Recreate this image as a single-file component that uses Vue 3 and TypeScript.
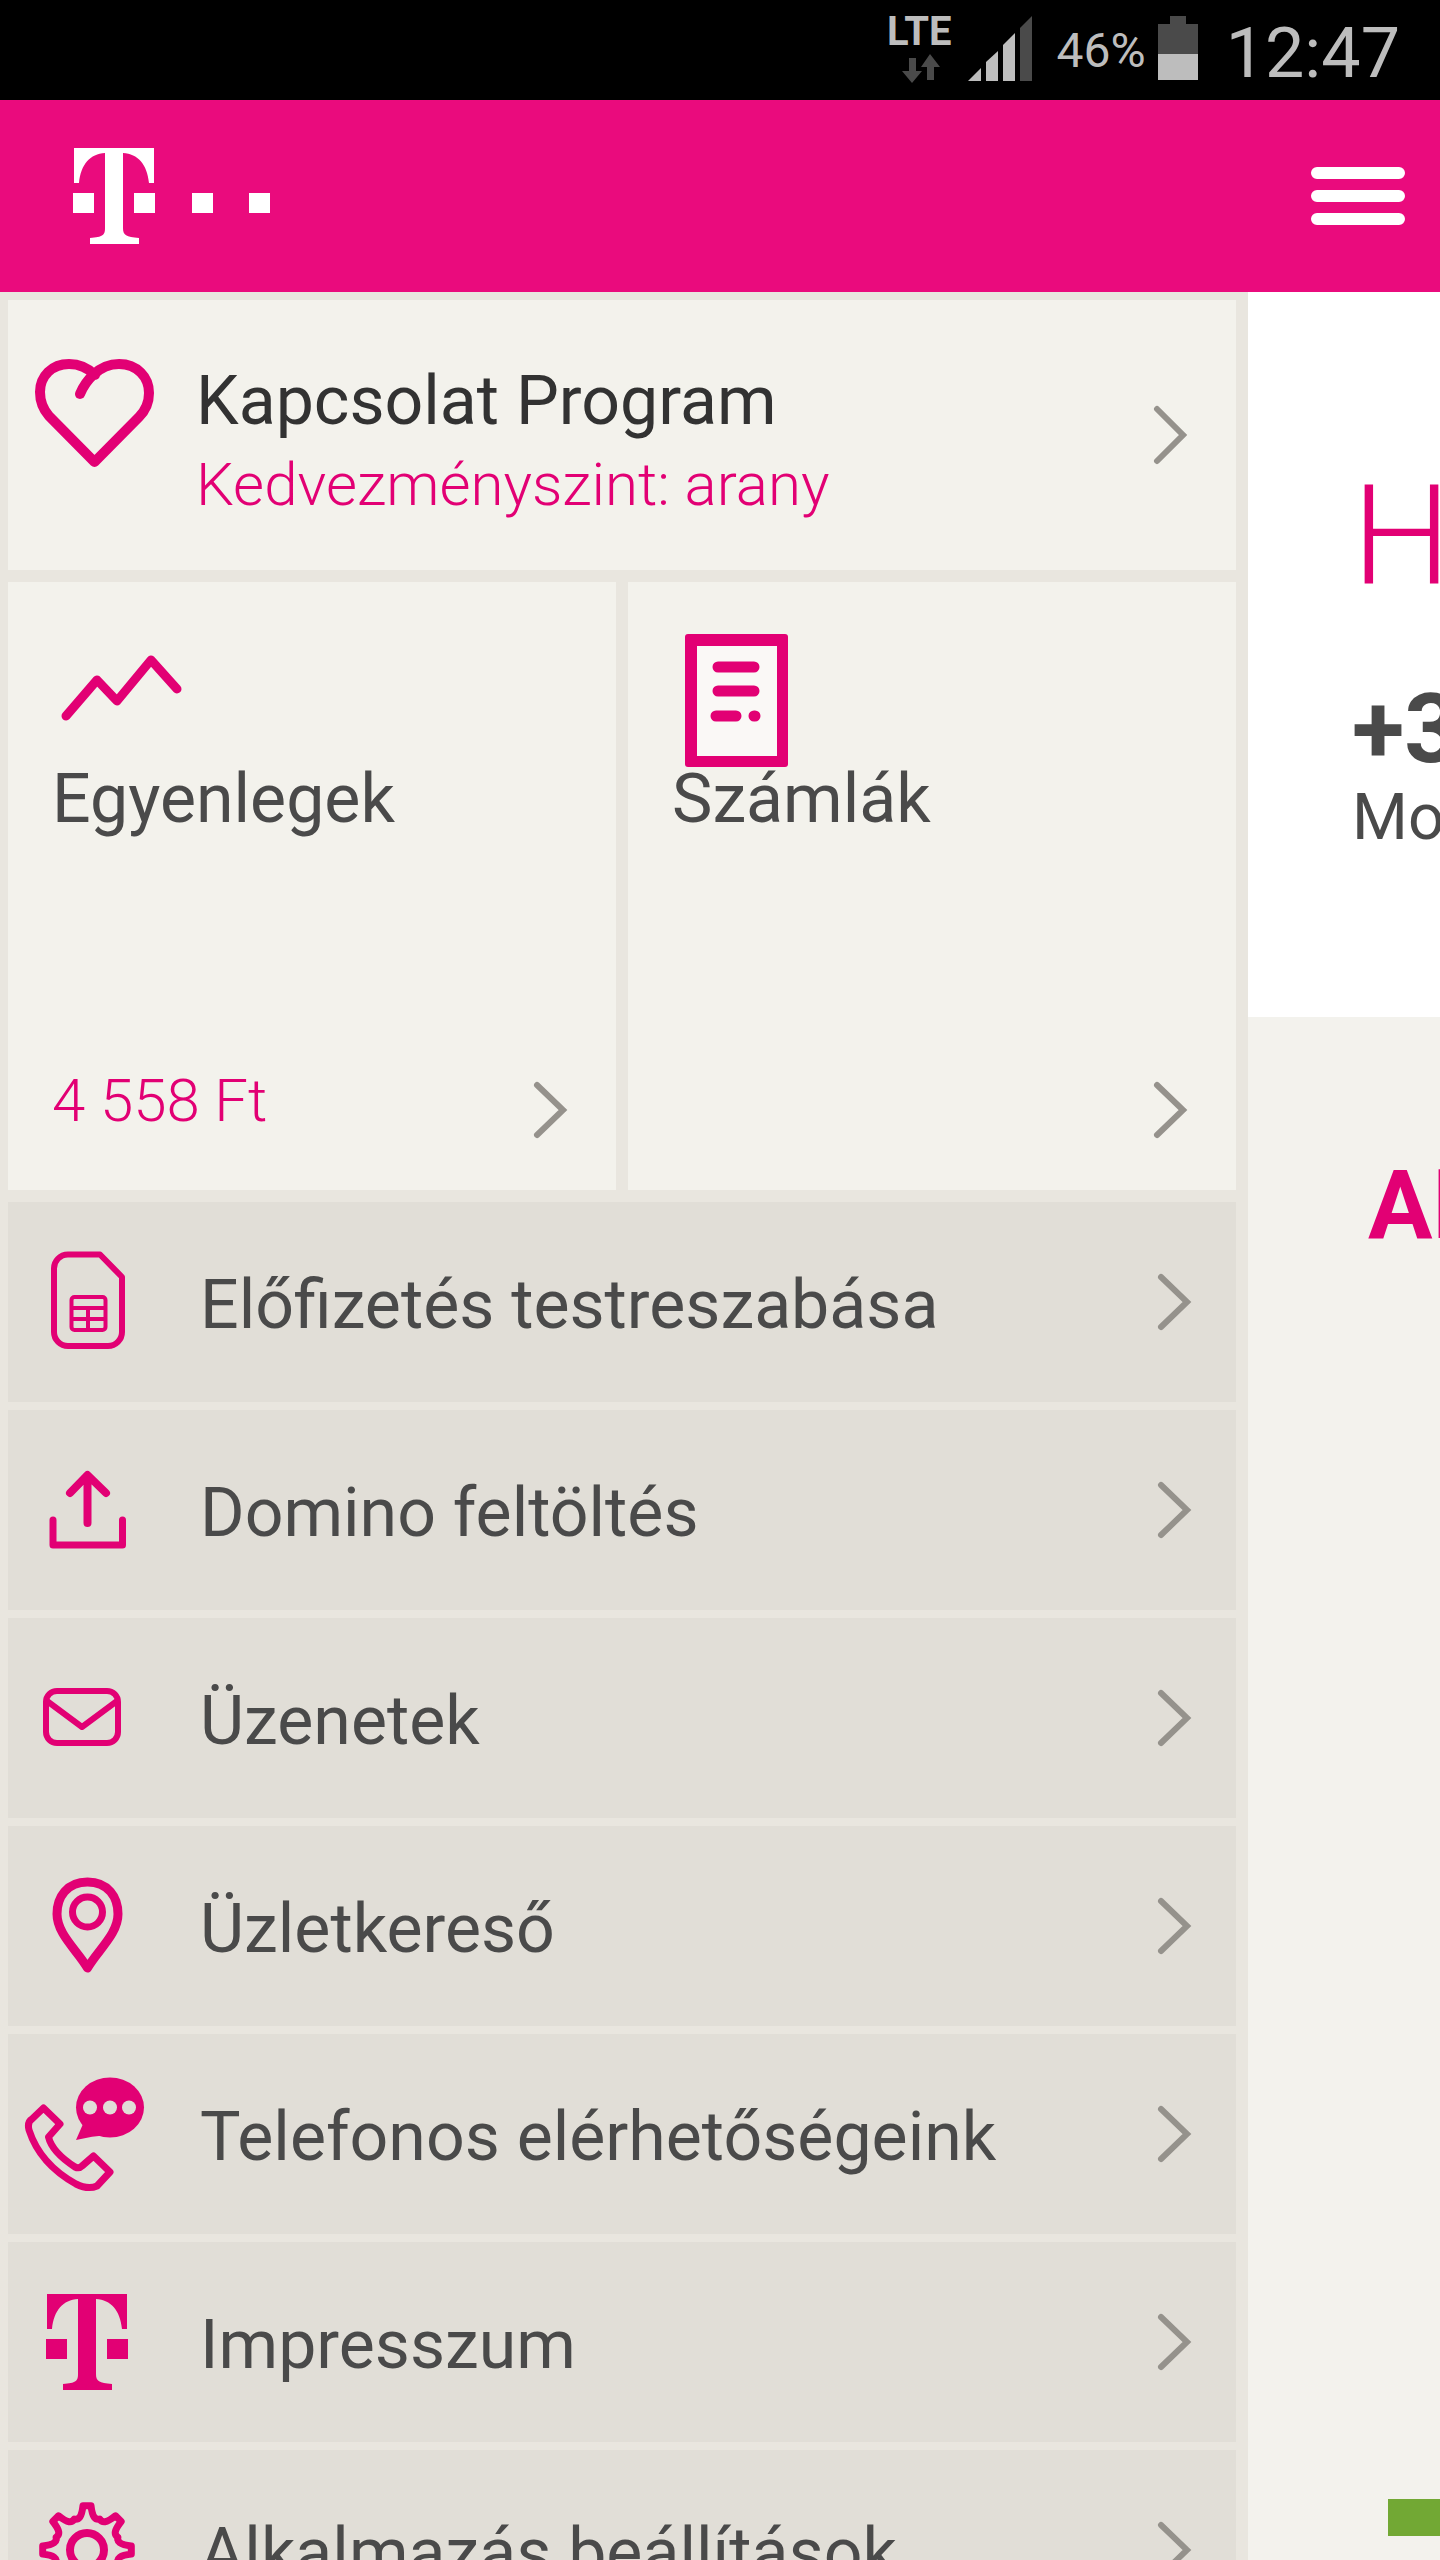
<script setup lang="ts">
type IconName = 'sim' | 'upload' | 'mail' | 'pin' | 'phone' | 'brand' | 'gear'

interface MenuItem {
  label: string
  icon: IconName
}

const items: MenuItem[] = [
  { label: 'Előfizetés testreszabása', icon: 'sim' },
  { label: 'Domino feltöltés', icon: 'upload' },
  { label: 'Üzenetek', icon: 'mail' },
  { label: 'Üzletkereső', icon: 'pin' },
  { label: 'Telefonos elérhetőségeink', icon: 'phone' },
  { label: 'Impresszum', icon: 'brand' },
  { label: 'Alkalmazás beállítások', icon: 'gear' },
]

const brandMark =
  'M1 0H81V35H76C74 16 65 6 50 5V80C50 87 53 89 66 90V96H17V90C30 89 32 87 32 80V5C17 6 8 16 6 35H1ZM0 45H21V65H0ZM61 45H82V65H61Z'

// Eight-tooth cog outline with scalloped valleys between the teeth
function gearPath(cx: number, cy: number): string {
  const point = (r: number, a: number) =>
    `${(cx + r * Math.cos(a)).toFixed(1)} ${(cy + r * Math.sin(a)).toFixed(1)}`
  const step = Math.PI / 4
  let d = ''
  for (let i = 0; i < 8; i++) {
    const a = i * step
    d += `${i ? 'L' : 'M'}${point(44.5, a - 0.09)}L${point(44.5, a + 0.09)}`
    d += `C${point(33, a + 0.16)} ${point(31, a + step / 2 - 0.12)} ${point(33.5, a + step / 2)}`
    d += `C${point(31, a + step / 2 + 0.12)} ${point(33, a + step - 0.16)} ${point(44.5, a + step - 0.09)}`
  }
  return d + 'Z'
}
const gear = gearPath(63, 60)
</script>

<template>
  <div class="app">
    <div class="status">
      <div class="network">
        <span class="lte">LTE</span>
        <svg width="48" height="30" viewBox="0 0 48 30" fill="#4a4a4a" aria-hidden="true">
          <path d="M14 4H21V17H27L17 29L7 17H14Z" />
          <path d="M32 26V13H26L35 0L45 13H39V26Z" />
        </svg>
      </div>
      <svg class="signal" width="64" height="66" viewBox="0 0 64 66" fill="#bdbdbd" aria-hidden="true">
        <path d="M0 65L13 52V65Z" />
        <path d="M18 65V46L30 35V65Z" />
        <path d="M35 65V29L47 17V65Z" />
        <path d="M52 65V12L64 0V65Z" fill="#4a4a4a" />
      </svg>
      <span class="percent">46%</span>
      <svg class="battery" width="40" height="64" viewBox="0 0 40 64" aria-hidden="true">
        <path d="M12 0H28V8H40V38H0V8H12Z" fill="#4a4a4a" />
        <path d="M0 38H40V64H0Z" fill="#bdbdbd" />
      </svg>
      <span class="clock">12:47</span>
    </div>

    <header class="header">
      <svg width="198" height="96" viewBox="0 0 198 96" fill="#fff" role="img" aria-label="Telekom">
        <path :d="brandMark" />
        <path d="M119 45H140V65H119ZM176 45H197V65H176Z" />
      </svg>
      <button class="burger" type="button" aria-label="Menü">
        <svg width="96" height="60" viewBox="0 0 96 60" stroke="#fff" stroke-width="12" stroke-linecap="round">
          <path d="M7 7H89M7 30H89M7 53H89" />
        </svg>
      </button>
    </header>

    <div class="body">
      <nav class="drawer">
        <a class="program" href="#">
          <svg class="heart stroked" width="128" height="120" viewBox="0 0 128 120" stroke-width="10">
            <path d="M48 41C53 29 66 11 87 11C105 11 117 24 117 40C117 50 113 58 107 64L62.500 109L17 63C10 55 8 48 8 39C8 23 20 11 37 11C48 11 56 15 63 22" />
          </svg>
          <span class="program-text">
            <span class="program-title">Kapcsolat Program</span>
            <span class="program-level">Kedvezményszint: arany</span>
          </span>
          <svg class="chevron" viewBox="0 0 40 60"><path d="M7 4L33 30L7 56" /></svg>
        </a>

        <div class="tiles">
          <a class="tile" href="#">
            <svg class="tile-icon stroked" width="134" height="134" viewBox="0 0 134 134" stroke-width="9">
              <path d="M12 83L43 47L63 68L97 27L123 56" />
            </svg>
            <span class="tile-label">Egyenlegek</span>
            <span class="tile-foot">
              <span class="amount">4 558 Ft</span>
              <svg class="chevron" viewBox="0 0 40 60"><path d="M7 5L33 30L7 55" /></svg>
            </span>
          </a>
          <a class="tile" href="#">
            <svg class="tile-icon" width="134" height="134" viewBox="0 0 134 134">
              <rect x="11" y="1" width="103" height="133" rx="3" fill="#e20074" />
              <rect x="23" y="13" width="80" height="110" fill="#faf8f6" />
              <path d="M44 34H80M44 58H80M42 83H62M80 83H81" stroke="#e20074" stroke-width="11" stroke-linecap="round" />
            </svg>
            <span class="tile-label">Számlák</span>
            <span class="tile-foot">
              <svg class="chevron" viewBox="0 0 40 60"><path d="M7 5L33 30L7 55" /></svg>
            </span>
          </a>
        </div>

        <ul class="menu">
          <li v-for="item in items" :key="item.label">
            <a class="row" href="#">
              <svg class="stroked" width="128" height="120" viewBox="0 0 128 120" stroke-width="7">
                <template v-if="item.icon === 'sim'">
                  <path d="M44 12.500H76L98 35V90A14 14 0 0 1 84 104H44A14 14 0 0 1 30 90V27A14 14 0 0 1 44 12.500Z" stroke-width="6" />
                  <g stroke-width="4">
                    <rect x="47.500" y="55" width="34" height="33" rx="3" />
                    <path d="M48 66H81M48 77H81M64 66V88" />
                  </g>
                </template>
                <template v-else-if="item.icon === 'upload'">
                  <path d="M29 70V95H98.500V70" />
                  <path d="M63.500 26V73M46 43L63.500 25L82 43" stroke-width="8" />
                </template>
                <template v-else-if="item.icon === 'mail'">
                  <rect x="22" y="33" width="72" height="52" rx="11" stroke-width="6" />
                  <path d="M23 43L58 69L93 43" stroke-width="6" />
                </template>
                <template v-else-if="item.icon === 'pin'">
                  <path d="M63.500 16C43 16 33 31 33 48C33 68 53 84 63.500 102C74 84 94 68 94 48C94 31 84 16 63.500 16Z" stroke-width="9" />
                  <circle cx="63.500" cy="46" r="15" />
                </template>
                <template v-else-if="item.icon === 'phone'">
                  <path d="M19.500 34L36 50L24.500 63Q28 78 51 93Q55 95 58 92L69.500 82L86 98L73 112Q64 116 52 110Q16 90 5 56Q3 48 8 45Z" />
                  <g stroke="none">
                    <ellipse cx="86" cy="33.500" rx="34" ry="30" fill="#e20074" />
                    <path d="M52 66L59 50L84 61Q68 62 52 66Z" fill="#e20074" />
                    <circle v-for="x in [66, 86, 105]" :key="x" :cx="x" cy="33.500" r="7" fill="#e1ded7" />
                  </g>
                </template>
                <g v-else-if="item.icon === 'brand'" transform="translate(22 12)" stroke="none" fill="#e20074">
                  <path :d="brandMark" />
                </g>
                <template v-else>
                  <path :d="gear" />
                  <circle cx="63" cy="60" r="17" stroke-width="8" />
                </template>
              </svg>
              <span class="row-label">{{ item.label }}</span>
              <svg class="chevron" viewBox="0 0 40 60"><path d="M7 5L33 30L7 55" /></svg>
            </a>
          </li>
        </ul>
      </nav>

      <main class="page">
        <section class="hero">
          <h1>H</h1>
          <p class="number">+3</p>
          <p class="plan">Mo</p>
        </section>
        <section class="details">
          <h2>AK</h2>
          <div class="meter"></div>
        </section>
      </main>
    </div>
  </div>
</template>

<style>
body {
  margin: 0;
}
</style>

<style scoped>
.app {
  display: flex;
  flex-direction: column;
  height: 100vh;
  overflow: hidden;
  font-family: Roboto, "Noto Sans", sans-serif;
  color: #4a4a4a;
}
svg {
  display: block;
  flex: none;
}
a {
  color: inherit;
  text-decoration: none;
}
.status {
  display: flex;
  flex: none;
  justify-content: flex-end;
  height: 100px;
  padding-right: 40px;
  box-sizing: border-box;
  background: #000;
  color: #bdbdbd;
}
.network {
  display: flex;
  flex-direction: column;
  align-items: center;
  padding-top: 12px;
  margin-right: 16px;
}
.lte {
  font-size: 40px;
  font-weight: 700;
  line-height: 40px;
  margin-bottom: 2px;
}
.signal,
.battery {
  margin-top: 16px;
}
.percent {
  font-size: 48px;
  line-height: 102px;
  margin: 0 12px 0 25px;
}
.clock {
  font-size: 70px;
  line-height: 106px;
  margin-left: 28px;
}
.header {
  display: flex;
  flex: none;
  align-items: center;
  justify-content: space-between;
  height: 192px;
  padding: 0 34px 0 73px;
  box-sizing: border-box;
  background: #ea0b7d;
}
.burger {
  padding: 0;
  border: 0;
  background: none;
}
.body {
  display: flex;
  flex: 1;
  min-height: 0;
  overflow: hidden;
}
.drawer {
  flex: none;
  width: calc(100% - 192px);
  box-sizing: border-box;
  padding: 8px 12px 0 8px;
  background: #e9e6df;
}
.stroked {
  fill: none;
  stroke: #e20074;
  stroke-linecap: round;
  stroke-linejoin: round;
}
.chevron {
  width: 40px;
  height: 60px;
  margin-left: auto;
  fill: none;
  stroke: #95928c;
  stroke-width: 6px;
  stroke-linecap: round;
}
.program {
  display: flex;
  align-items: center;
  height: 270px;
  padding: 0 46px 0 24px;
  background: #f3f2ec;
}
.heart {
  align-self: flex-start;
  margin-top: 53px;
}
.program-text {
  display: flex;
  flex-direction: column;
  margin: 16px 0 0 36px;
  line-height: 84px;
}
.program-title {
  font-size: 68px;
  color: #323232;
}
.program-level {
  font-size: 60px;
  font-weight: 300;
  color: #e20074;
}
.tiles {
  display: grid;
  grid-template-columns: 1fr 1fr;
  gap: 12px;
  margin: 12px 0;
}
.tile {
  display: flex;
  flex-direction: column;
  box-sizing: border-box;
  aspect-ratio: 1;
  padding: 51px 46px 50px 44px;
  background: #f3f2ec;
}
.tile-icon {
  margin-left: 2px;
}
.tile-label {
  font-size: 68px;
  line-height: 64px;
}
.tile-foot {
  display: flex;
  align-items: flex-start;
  margin-top: auto;
}
.amount {
  font-size: 60px;
  font-weight: 300;
  line-height: 42px;
  color: #e20074;
}
.menu {
  display: flex;
  flex-direction: column;
  gap: 8px;
  margin: 0;
  padding: 0;
  list-style: none;
}
.row {
  display: flex;
  align-items: center;
  height: 200px;
  padding: 0 42px 0 16px;
  background: #e1ded7;
}
.row-label {
  padding-top: 6px;
  margin-left: 48px;
  font-size: 68px;
  white-space: nowrap;
}
.page {
  display: flex;
  flex-direction: column;
  flex: none;
  width: 100%;
  background: #f3f2ed;
}
.hero {
  height: 725px;
  padding: 162px 104px 0;
  box-sizing: border-box;
  background: #fff;
}
h1,
h2,
p {
  margin: 0;
}
h1 {
  font-size: 140px;
  font-weight: 300;
  line-height: 164px;
  color: #e20074;
}
.number {
  margin-top: 61px;
  font-size: 96px;
  font-weight: 700;
  line-height: 100px;
}
.plan {
  margin-top: 3px;
  font-size: 64px;
  line-height: 72px;
}
.details {
  padding: 138px 120px 0;
}
h2 {
  font-size: 96px;
  font-weight: 700;
  line-height: 100px;
  color: #e20074;
}
.meter {
  height: 37px;
  margin: 1244px 0 0 20px;
  background: #72a834;
}
</style>
